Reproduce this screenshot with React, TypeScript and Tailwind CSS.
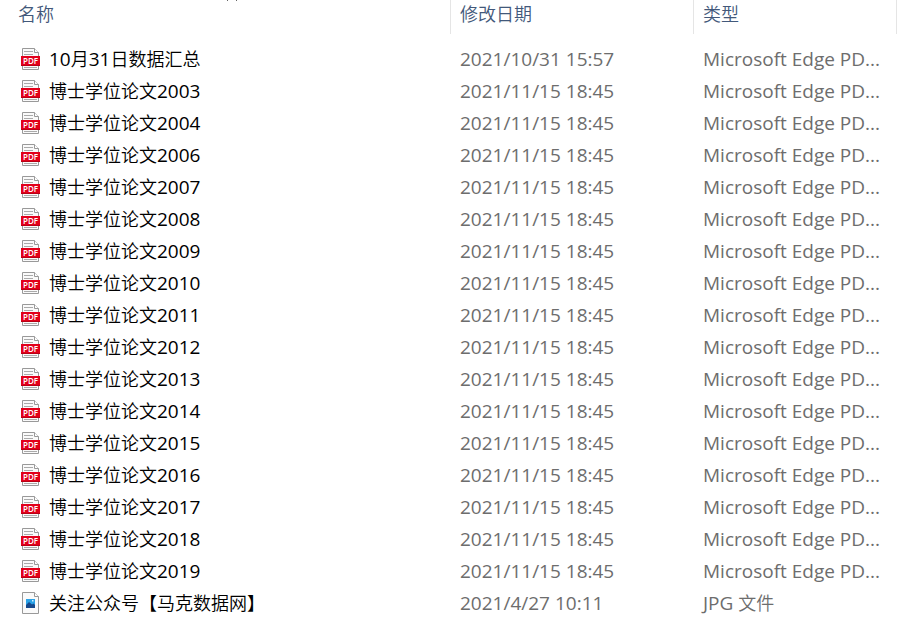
type FileKind = "pdf" | "jpg";

interface FileEntry {
  name: string;
  modified: string;
  type: string;
  kind: FileKind;
}

const YEARS = [2003, 2004, 2006, 2007, 2008, 2009, 2010, 2011, 2012, 2013, 2014, 2015, 2016, 2017, 2018, 2019];

const FILES: FileEntry[] = [
  { name: "10月31日数据汇总", modified: "2021/10/31 15:57", type: "Microsoft Edge PD...", kind: "pdf" },
  ...YEARS.map((year): FileEntry => ({
    name: `博士学位论文${year}`,
    modified: "2021/11/15 18:45",
    type: "Microsoft Edge PD...",
    kind: "pdf",
  })),
  { name: "关注公众号【马克数据网】", modified: "2021/4/27 10:11", type: "JPG 文件", kind: "jpg" },
];

// Latin text runs slightly larger than the Chinese glyphs next to it
function MixedText({ text }: { text: string }) {
  const parts = text.match(/[\x20-\x7e]+|[^\x20-\x7e]+/g) ?? [];
  return (
    <>
      {parts.map((part, i) => (
        <span key={i} className={/^[\x20-\x7e]/.test(part) ? "text-[19px]" : "text-[18px] font-[350]"}>
          {part}
        </span>
      ))}
    </>
  );
}

function PdfIcon() {
  return (
    <svg className="h-6 w-5 shrink-0" viewBox="0 0 20 24" aria-hidden="true">
      <path d="M1.5 1.5h12l4 4v17h-16z" fill="#fafafa" stroke="#999" />
      <path d="M13.5 1.5v4h4" fill="#fff" stroke="#999" />
      <path d="M3 4.5h9M3 7.5h9M3 20.5h13" stroke="#aaa" />
      <rect y="9" width="19" height="10" fill="#e2001a" />
      <path d="M0 18.5h19" stroke="#b80015" />
      <text
        x="9.5"
        y="17"
        textAnchor="middle"
        fill="#fff"
        fontSize="8"
        fontWeight="600"
        fontFamily="Open Sans, sans-serif"
      >
        PDF
      </text>
    </svg>
  );
}

function JpgIcon() {
  return (
    <svg className="h-6 w-5 shrink-0" viewBox="0 0 20 24" aria-hidden="true">
      <path d="M1.5 1.5h12l4 4v17h-16z" fill="#fafafa" stroke="#999" />
      <path d="M13.5 1.5v4h4" fill="#fff" stroke="#999" />
      <rect x="5" y="8" width="9" height="9" fill="#2ba3e8" />
      <path d="M5 14l3-3 3 2.5 1.5-1L14 14v3H5z" fill="#17498c" />
      <rect x="11" y="9" width="1.5" height="1.5" fill="#d6f1ff" />
    </svg>
  );
}

export default function App() {
  return (
    <main className="min-h-screen overflow-hidden bg-white pr-1 font-['Open_Sans','Noto_Sans_CJK_SC',sans-serif]">
      <table className="w-full table-fixed border-collapse text-left">
        <colgroup>
          <col />
          <col className="w-[243px]" />
          <col className="w-[203px]" />
        </colgroup>
        <thead className="text-[18px] leading-7 text-[#42587a]">
          <tr className="h-[34px] align-top">
            <th scope="col" className="relative p-0 pl-[18px] font-[350]">
              名称
              {/* Sort direction */}
              <svg className="absolute -top-1 left-1/2 h-[5px] w-3" viewBox="0 0 12 5" aria-hidden="true">
                <path d="M1 5l5-5 5 5" fill="none" stroke="#666" />
              </svg>
              <span className="absolute top-0 right-0 h-[34px] w-px bg-[#e5e5e5]" />
            </th>
            <th scope="col" className="relative p-0 pl-[9px] font-[350]">
              修改日期
              <span className="absolute top-0 right-0 h-[34px] w-px bg-[#e5e5e5]" />
            </th>
            <th scope="col" className="relative p-0 pl-[9px] font-[350]">
              类型
              <span className="absolute top-0 right-0 h-[34px] w-px bg-[#e5e5e5]" />
            </th>
          </tr>
        </thead>
        <tbody className="leading-8 whitespace-nowrap text-[#6d6d6d] before:block before:h-[9px] before:content-['']">
          {FILES.map((file) => (
            <tr key={file.name} className="h-8">
              <td className="p-0 pl-[21px] text-black">
                <div className="flex h-8 items-center gap-2">
                  {file.kind === "pdf" ? <PdfIcon /> : <JpgIcon />}
                  <span>
                    <MixedText text={file.name} />
                  </span>
                </div>
              </td>
              <td className="p-0 pl-[9px]">
                <div className="h-8">
                  <MixedText text={file.modified} />
                </div>
              </td>
              <td className="p-0 pl-[9px]">
                <div className="h-8">
                  <MixedText text={file.type} />
                </div>
              </td>
            </tr>
          ))}
        </tbody>
      </table>
    </main>
  );
}
